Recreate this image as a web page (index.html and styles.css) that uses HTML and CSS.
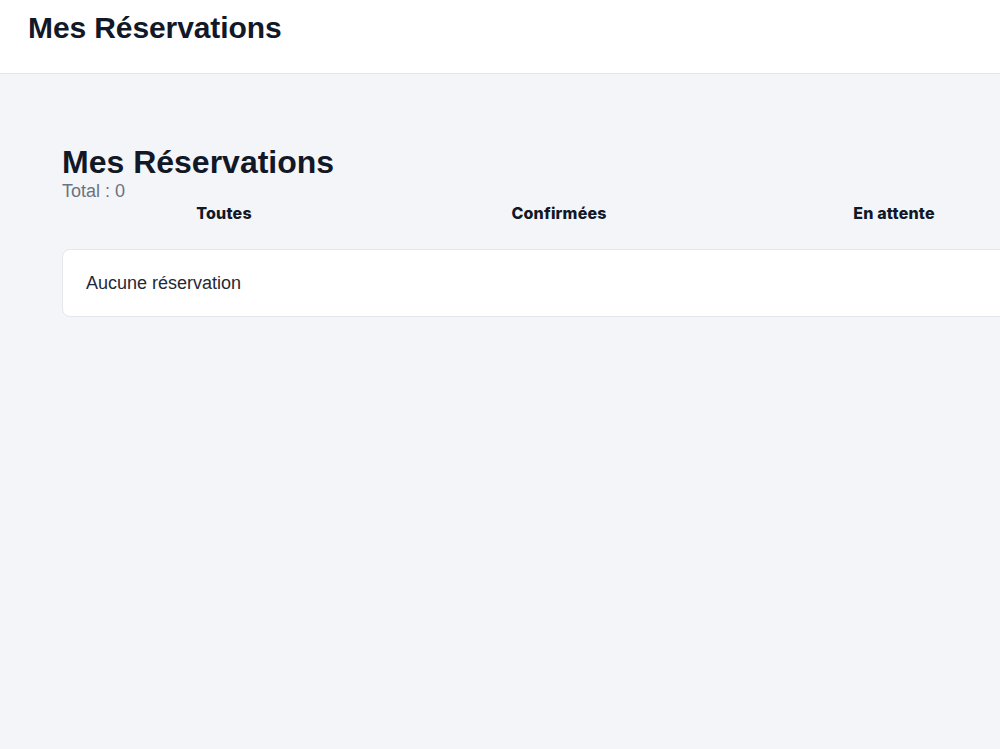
FILE: index.html
```html
<!DOCTYPE html>
<html lang="fr">
<head>
    <meta charset="UTF-8">
    <meta name="viewport" content="width=device-width, initial-scale=1.0">
    <title>Mes Réservations</title>
    <link rel="stylesheet" href="styles.css">
</head>
<body>

    <header class="topbar">
        <h1>Mes Réservations</h1>
    </header>

    <main class="page">
        <div class="page-head">
            <h2>Mes Réservations</h2>
            <p class="total">Total : 0</p>
        </div>

        <nav class="tabs">
            <button class="tab">Toutes</button>
            <button class="tab">Confirmées</button>
            <button class="tab">En attente</button>
        </nav>

        <div class="list">
            <div class="empty">Aucune réservation</div>
        </div>
    </main>

</body>
</html>
```

FILE: styles.css
```css
html, body {
    margin: 0;
    padding: 0;
}

body {
    font-family: 'Liberation Sans', Arial, sans-serif;
    background: #f4f5f9;
    color: #111827;
    overflow-x: hidden;
    min-height: 100vh;
}

.topbar {
    background: #ffffff;
    border-bottom: 1px solid #e5e7eb;
    height: 74px;
    display: flex;
    align-items: center;
    padding: 0 28px;
    box-sizing: border-box;
}

.topbar h1 {
    font-size: 30px;
    font-weight: 700;
    margin: 0 0 17px;
    color: #111827;
    letter-spacing: -0.1px;
}

.page {
    padding: 70px 0 0 62px;
    width: 1100px;
}

.page-head h2 {
    font-size: 32px;
    font-weight: 700;
    margin: 0;
    color: #111827;
}

.total {
    font-size: 18px;
    color: #6b7280;
    margin: 0;
    line-height: 21px;
}

.tabs {
    display: grid;
    grid-template-columns: repeat(3, 324px);
    column-gap: 11px;
}

.tab {
    background: none;
    border: none;
    font-family: Inter, sans-serif;
    font-size: 16px;
    font-weight: 800;
    letter-spacing: 0.2px;
    color: #111827;
    padding: 1px 0 7px;
    line-height: 20px;
    cursor: pointer;
}

.list {
    margin-top: 19px;
}

.empty {
    background: #ffffff;
    border: 1px solid #e5e7eb;
    border-radius: 8px;
    padding: 23px;
    font-size: 18px;
    line-height: 20px;
    color: #1f2937;
}
```
